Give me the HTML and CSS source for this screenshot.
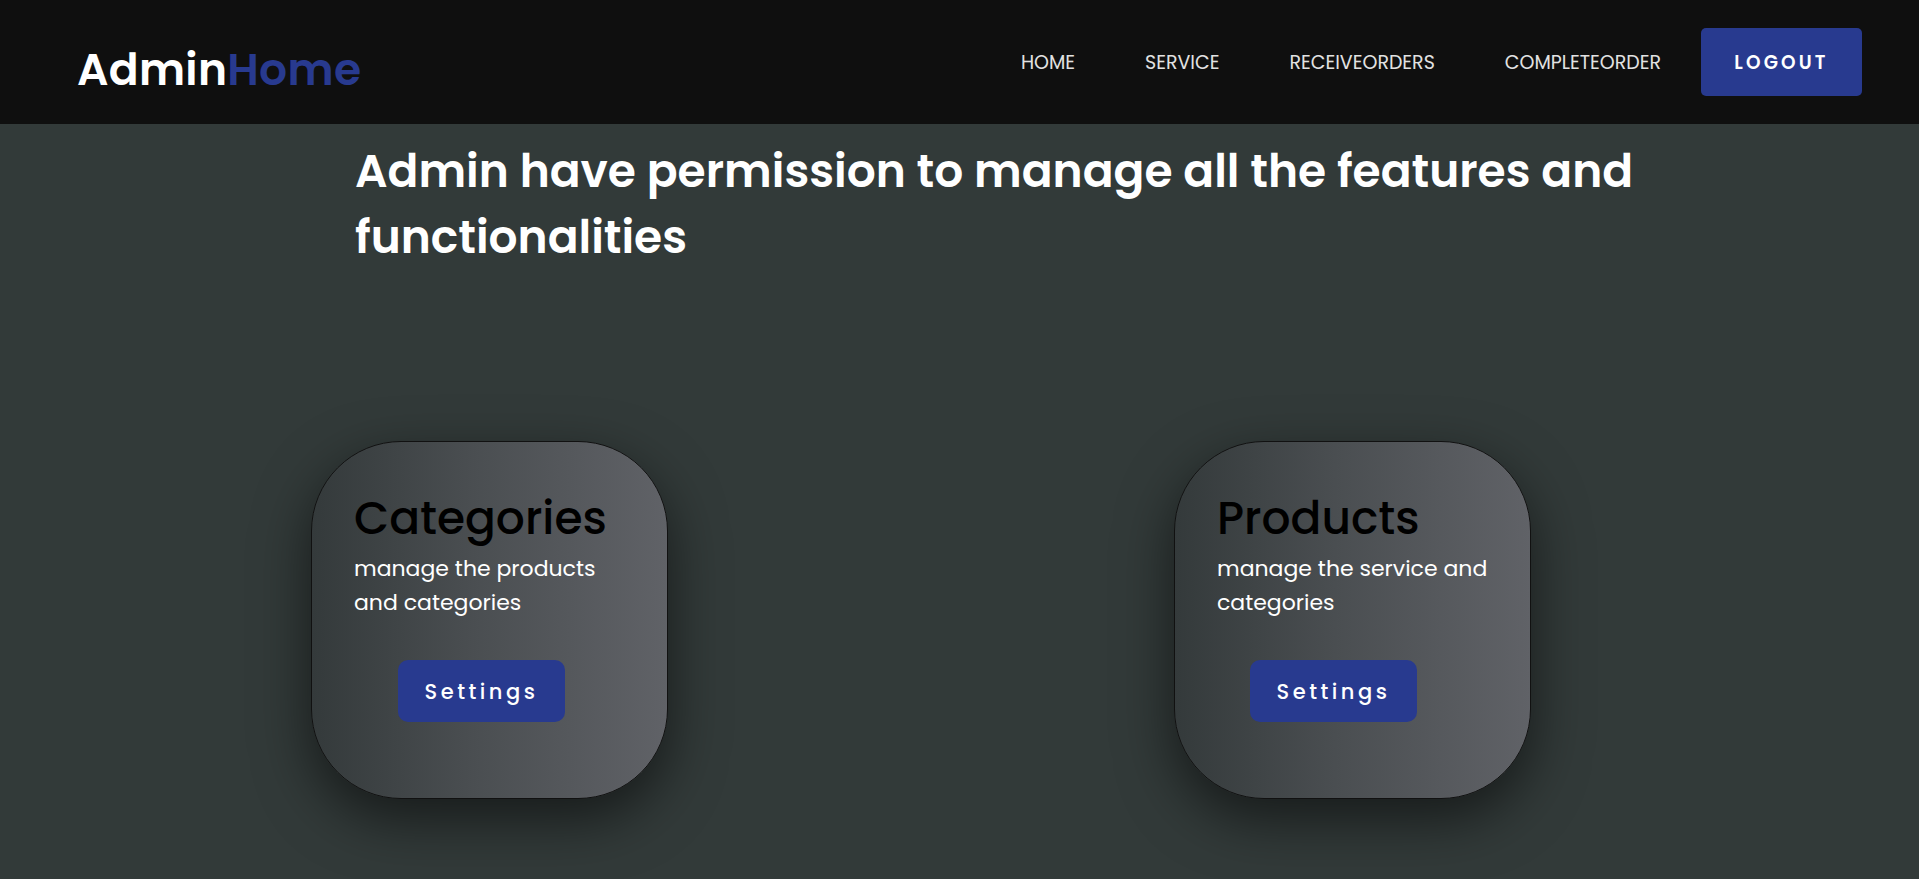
FILE: index.html
```html
<!DOCTYPE html>
<html lang="en">
<head>
<meta charset="utf-8">
<title>AdminHome</title>
<link rel="stylesheet" href="styles.css">
</head>
<body>
<header class="topbar">
  <a class="logo" href="#">Admin<span class="logo-accent">Home</span></a>
  <nav class="nav">
    <a class="nav-link" href="#">HOME</a>
    <a class="nav-link" href="#">SERVICE</a>
    <a class="nav-link" href="#">RECEIVEORDERS</a>
    <a class="nav-link" href="#">COMPLETEORDER</a>
    <a class="logout" href="#">LOGOUT</a>
  </nav>
</header>
<main class="content">
  <h1 class="intro">Admin have permission to manage all the features and functionalities</h1>
  <section class="cards">
    <div class="card">
      <h2 class="card-title">Categories</h2>
      <p class="card-text">manage the products<br>and categories</p>
      <a class="card-btn card-btn-a" href="#">Settings</a>
    </div>
    <div class="card">
      <h2 class="card-title">Products</h2>
      <p class="card-text">manage the service and<br>categories</p>
      <a class="card-btn card-btn-b" href="#">Settings</a>
    </div>
  </section>
</main>
</body>
</html>
```
FILE: styles.css
```css
* { box-sizing: border-box; }
html, body { margin: 0; padding: 0; }
body {
  background: #323a39;
  font-family: "Poppins", "Open Sans", sans-serif;
  color: #fff;
  min-height: 879px;
  overflow: hidden;
}
a { text-decoration: none; }

.topbar {
  height: 124px;
  background: #0f0f0f;
  display: flex;
  align-items: center;
  justify-content: space-between;
  padding: 0 57px 0 77px;
}
.logo {
  color: #fff;
  font-size: 44px;
  font-weight: 600;
  letter-spacing: 0.3px;
  padding-top: 14px;
}
.logo-accent { color: #283a8f; }

.nav {
  display: flex;
  align-items: center;
}
.nav-link {
  color: #e2e2e2;
  font-size: 19px;
  font-weight: 400;
  padding: 0 35px;
}
.logout {
  margin-left: 5px;
  width: 161px;
  height: 68px;
  background: #283a8f;
  border-radius: 5px;
  color: #fff;
  font-size: 18.5px;
  font-weight: 600;
  letter-spacing: 3.2px;
  display: flex;
  align-items: center;
  justify-content: center;
}

.content { padding: 14px 0 0 355px; }
.intro {
  margin: 0;
  width: 1320px;
  font-size: 45.5px;
  font-weight: 600;
  line-height: 66px;
}

.cards {
  display: flex;
  gap: 506px;
  margin: 171px 0 0 -44px;
}
.card {
  width: 357px;
  height: 358px;
  border-radius: 90px;
  border: 1px solid #111;
  background: linear-gradient(90deg, #343a3b 0%, #4a4e51 45%, #606267 100%);
  box-shadow: 0 20px 55px rgba(0, 0, 0, 0.55);
  padding: 46px 30px 0 42px;
}
.card-title {
  margin: 0;
  color: #000;
  font-size: 45.5px;
  font-weight: 500;
  line-height: 60px;
}
.card-text {
  margin: 4px 0 0;
  font-size: 22px;
  line-height: 34px;
  font-weight: 400;
}
.card-btn {
  display: inline-flex;
  align-items: center;
  justify-content: center;
  width: 167px;
  height: 62px;
  margin-top: 40px;
  border-radius: 10px;
  background: #283a8f;
  color: #fff;
  font-size: 21px;
  font-weight: 500;
  letter-spacing: 3.5px;
}
.card-btn-a { margin-left: 44px; }
.card-btn-b { margin-left: 33px; }
```
